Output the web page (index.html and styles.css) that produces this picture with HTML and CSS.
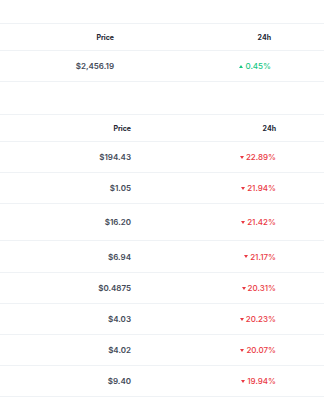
FILE: index.html
```html
<!DOCTYPE html>
<html>
<head>
<meta charset="utf-8">
<link rel="stylesheet" href="styles.css">
</head>
<body>
<div class="page">
  <div class="table t1">
    <div class="row head">
      <div class="c price">Price</div>
      <div class="c chg">24h</div>
    </div>
    <div class="row">
      <div class="c price val">$2,456.19</div>
      <div class="c chg up"><span class="caret up-caret"></span>0.45%</div>
    </div>
  </div>

  <div class="table t2">
    <div class="row head">
      <div class="c price">Price</div>
      <div class="c chg">24h</div>
    </div>
    <div class="row">
      <div class="c price val">$194.43</div>
      <div class="c chg down"><span class="caret down-caret"></span>22.89%</div>
    </div>
    <div class="row">
      <div class="c price val">$1.05</div>
      <div class="c chg down"><span class="caret down-caret"></span>21.94%</div>
    </div>
    <div class="row tall">
      <div class="c price val">$16.20</div>
      <div class="c chg down"><span class="caret down-caret"></span>21.42%</div>
    </div>
    <div class="row mid">
      <div class="c price val">$6.94</div>
      <div class="c chg down"><span class="caret down-caret"></span>21.17%</div>
    </div>
    <div class="row">
      <div class="c price val">$0.4875</div>
      <div class="c chg down"><span class="caret down-caret"></span>20.31%</div>
    </div>
    <div class="row">
      <div class="c price val">$4.03</div>
      <div class="c chg down"><span class="caret down-caret"></span>20.23%</div>
    </div>
    <div class="row">
      <div class="c price val">$4.02</div>
      <div class="c chg down"><span class="caret down-caret"></span>20.07%</div>
    </div>
    <div class="row">
      <div class="c price val">$9.40</div>
      <div class="c chg down"><span class="caret down-caret"></span>19.94%</div>
    </div>
  </div>
</div>
</body>
</html>
```

FILE: styles.css
```css
html, body {
  margin: 0;
  padding: 0;
  background: #ffffff;
}
body {
  font-family: Inter, "Noto Sans", sans-serif;
  font-size: 8px;
  color: #3f4654;
}
.page {
  display: flex;
  flex-direction: column;
  padding-top: 23px;
}
.table {
  border-top: 1px solid #eff2f5;
}
.t2 {
  margin-top: 32px;
}
.row {
  display: grid;
  height: 30px;
  align-items: center;
  border-bottom: 1px solid #eff2f5;
}
.row.head {
  height: 26px;
}
.row.tall {
  height: 36px;
}
.row.mid {
  height: 31px;
}
.t1 .row {
  grid-template-columns: 114px 157px;
}
.t2 .row {
  grid-template-columns: 131px 145px;
}
.c {
  text-align: right;
  white-space: nowrap;
}
.head .c {
  font-size: 7px;
  font-weight: 700;
  color: #222531;
}
.val {
  color: #444b59;
  font-weight: 600;
}
.chg {
  font-weight: 500;
  display: flex;
  justify-content: flex-end;
  align-items: center;
}
.up { color: #16c784; }
.down { color: #ea3943; }
.caret {
  display: inline-block;
  width: 0;
  height: 0;
  margin-right: 2px;
  border-left: 2.5px solid transparent;
  border-right: 2.5px solid transparent;
}
.up-caret {
  border-bottom: 3px solid #16c784;
}
.down-caret {
  border-top: 3px solid #ea3943;
}
```
